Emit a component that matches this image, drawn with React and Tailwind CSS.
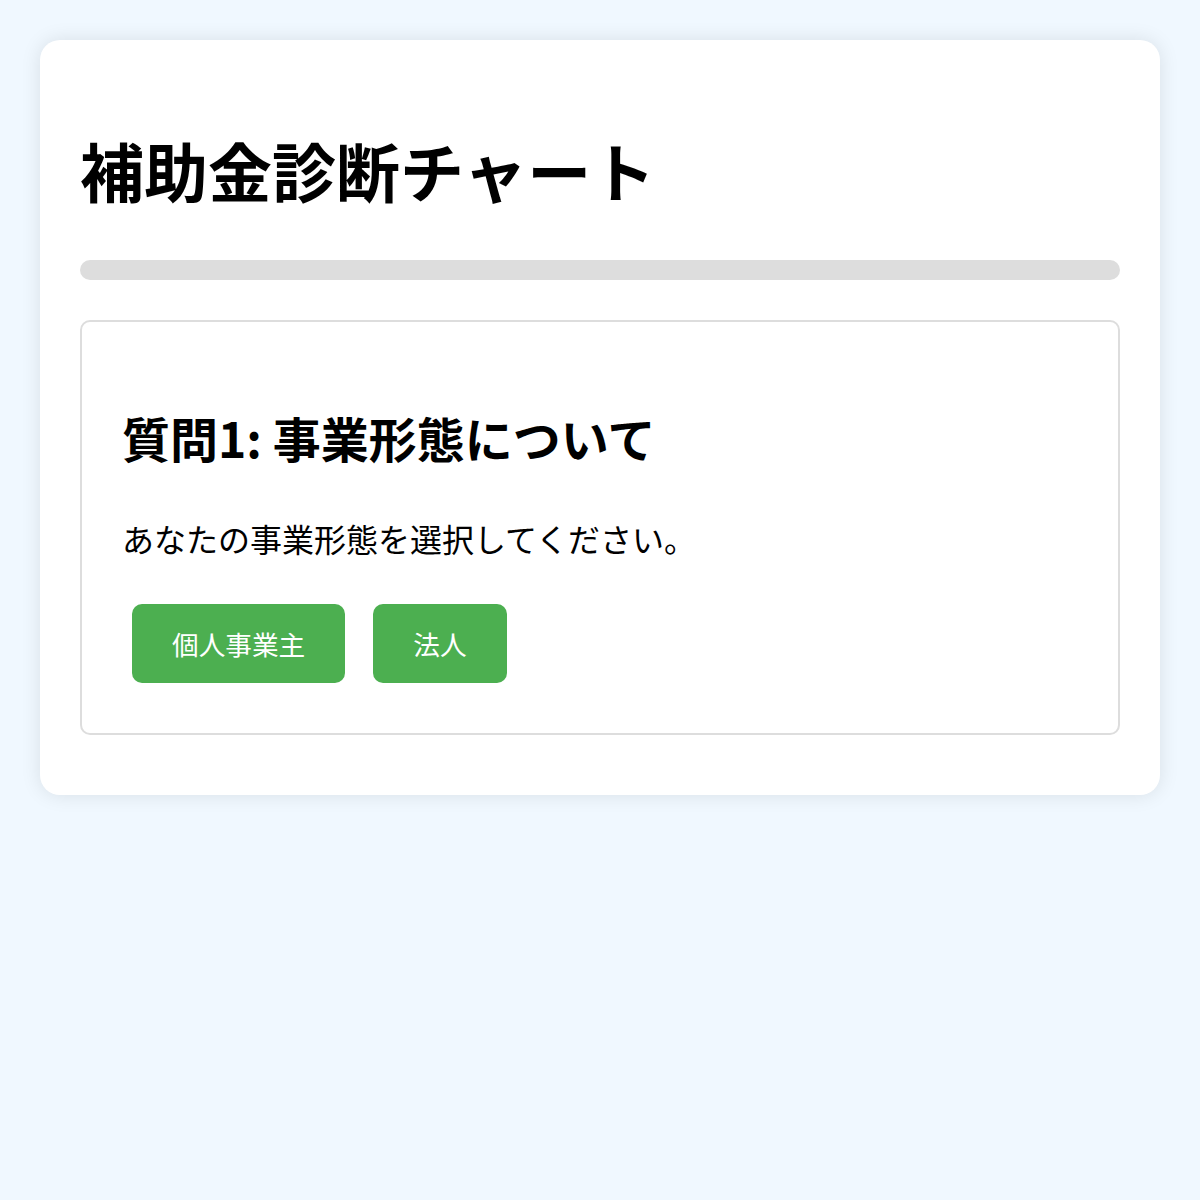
import React, { useState } from 'react';

const font = { fontFamily: '"Noto Sans CJK JP", "Noto Sans", sans-serif' };

const App = () => {
  const [answer, setAnswer] = useState(null);

  return (
    <div className="min-h-screen bg-[#f0f8ff] p-[40px] text-black" style={font}>
      <div className="bg-white rounded-[20px] p-[40px] shadow-[0_0_20px_rgba(0,0,0,0.1)]">
        <h1 className="text-[64px] font-bold leading-[normal] mt-[43px] mb-[45px]">補助金診断チャート</h1>

        {/* 進捗バー */}
        <div className="h-[20px] bg-[#ddd] rounded-[10px] mb-[40px] overflow-hidden">
          <div className="h-full bg-[#4CAF50] w-0" />
        </div>

        {/* 質問 */}
        <div className="border-2 border-[#ddd] rounded-[10px] p-[40px] mb-[20px]">
          <h2 className="text-[48px] font-bold leading-[normal] my-[40px]">質問1: 事業形態について</h2>
          <p className="text-[32px] leading-[normal] mt-[43px] mb-[32px]">あなたの事業形態を選択してください。</p>
          <div className="flex gap-[28px] pl-[10px] pt-[11px] pb-[10px]">
            {['個人事業主', '法人'].map((label) => (
              <button
                key={label}
                onClick={() => setAnswer(label)}
                className="bg-[#4CAF50] text-white text-[26.67px] leading-[normal] px-[40px] py-[20px] rounded-[10px] cursor-pointer hover:bg-[#45a049]"
              >
                {label}
              </button>
            ))}
          </div>
        </div>
      </div>
    </div>
  );
};

export default App;
